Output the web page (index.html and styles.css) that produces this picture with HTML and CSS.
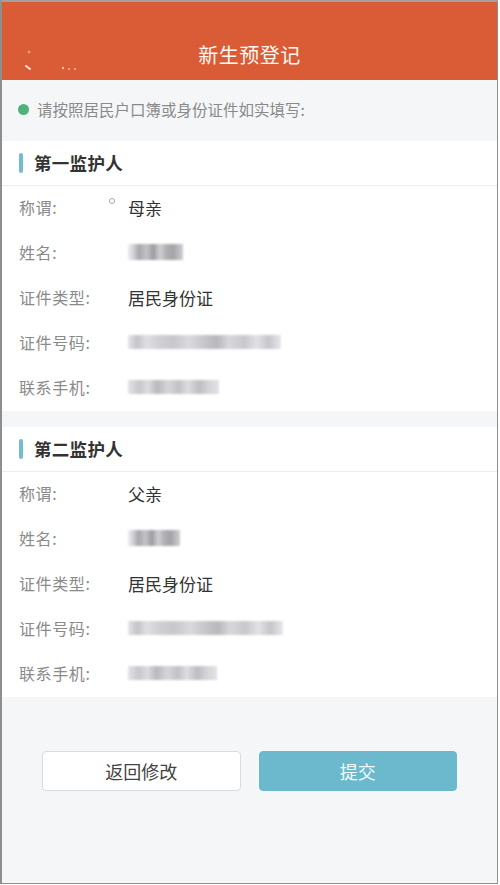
FILE: index.html
```html
<!DOCTYPE html>
<html lang="zh-CN">
<head>
<meta charset="utf-8">
<title>新生预登记</title>
<link rel="stylesheet" href="styles.css">
</head>
<body>
<div class="phone">
  <header class="topbar">
    <div class="back-blur">
      <svg width="70" height="30" viewBox="0 0 70 30">
        <circle cx="7" cy="4" r="1.5" fill="#fff" opacity="0.35"/>
        <path d="M4 18 L8 21" stroke="#fff" stroke-width="2" stroke-linecap="round" opacity="0.85"/>
        <circle cx="41" cy="20" r="1.2" fill="#fff" opacity="0.6"/>
        <circle cx="47" cy="21" r="1" fill="#fff" opacity="0.6"/>
        <circle cx="53" cy="21" r="1" fill="#fff" opacity="0.6"/>
      </svg>
    </div>
    <h1 class="title">新生预登记</h1>
  </header>

  <div class="notice">
    <span class="dot"></span>
    <span class="notice-text">请按照居民户口簿或身份证件如实填写:</span>
  </div>

  <section class="card">
    <div class="card-head"><span class="bar"></span><span class="card-title">第一监护人</span></div>
    <div class="row"><span class="label">称谓:</span><span class="value with-radio"><span class="radio"></span>母亲</span></div>
    <div class="row"><span class="label">姓名:</span><span class="value"><span class="mosaic name" style="width:55px"></span></span></div>
    <div class="row"><span class="label">证件类型:</span><span class="value">居民身份证</span></div>
    <div class="row"><span class="label">证件号码:</span><span class="value"><span class="mosaic long" style="width:153px"></span></span></div>
    <div class="row"><span class="label">联系手机:</span><span class="value"><span class="mosaic" style="width:91px"></span></span></div>
  </section>

  <section class="card second">
    <div class="card-head"><span class="bar"></span><span class="card-title">第二监护人</span></div>
    <div class="row"><span class="label">称谓:</span><span class="value">父亲</span></div>
    <div class="row"><span class="label">姓名:</span><span class="value"><span class="mosaic name" style="width:52px"></span></span></div>
    <div class="row"><span class="label">证件类型:</span><span class="value">居民身份证</span></div>
    <div class="row"><span class="label">证件号码:</span><span class="value"><span class="mosaic long" style="width:155px"></span></span></div>
    <div class="row"><span class="label">联系手机:</span><span class="value"><span class="mosaic" style="width:89px"></span></span></div>
  </section>

  <div class="actions">
    <button class="btn btn-back">返回修改</button>
    <button class="btn btn-submit">提交</button>
  </div>
</div>
</body>
</html>
```

FILE: styles.css
```css
* { box-sizing: border-box; }
html, body { margin: 0; padding: 0; background: #ffffff; }
body {
  font-family: "Noto Sans CJK SC", "Noto Sans", sans-serif;
  width: 500px;
  height: 885px;
}
.phone {
  width: 498px;
  height: 884px;
  border-left: 2px solid #8e8e8e;
  border-top: 2px solid #a0a0a0;
  border-right: 1px solid #8e8e8e;
  border-bottom: 1px solid #8e8e8e;
  background: #f5f6f8;
  overflow: hidden;
}
.topbar {
  position: relative;
  height: 78px;
  background: #d95c37;
  display: flex;
  align-items: flex-end;
  justify-content: center;
  padding-bottom: 10px;
}
.back-blur {
  position: absolute;
  left: 20px;
  top: 46px;
  filter: blur(0.6px);
}
.back-blur svg { display: block; }
.title {
  margin: 0;
  font-size: 20px;
  font-weight: 400;
  color: #fff8f2;
  letter-spacing: 0.5px;
  line-height: 30px;
}
.notice {
  height: 61px;
  display: flex;
  align-items: center;
  padding-left: 16px;
  padding-bottom: 3px;
  background: #f5f6f8;
}
.dot {
  width: 11px;
  height: 11px;
  border-radius: 50%;
  background: #4fb279;
  margin-right: 8px;
}
.notice-text {
  font-size: 15.5px;
  color: #8a8a8a;
}
.card {
  background: #ffffff;
}
.card.second { margin-top: 16px; }
.card-head {
  height: 45px;
  border-bottom: 1px solid #ececec;
  display: flex;
  align-items: center;
  padding-left: 17px;
  padding-bottom: 1px;
}
.bar {
  width: 4px;
  height: 20px;
  border-radius: 2px;
  background: #72bdd0;
  margin-right: 11px;
}
.card-title {
  font-size: 17.5px;
  font-weight: 700;
  color: #333333;
  letter-spacing: 0.3px;
}
.row {
  height: 45px;
  display: flex;
  align-items: center;
  padding-left: 17px;
  padding-bottom: 3px;
}
.label {
  width: 109px;
  font-size: 16px;
  color: #8a8a8a;
  letter-spacing: 0.6px;
}
.value {
  font-size: 17px;
  color: #333333;
  display: flex;
  align-items: center;
}
.with-radio { position: relative; }
.radio {
  position: absolute;
  left: -19px;
  top: 3px;
  width: 6px;
  height: 6px;
  border: 1px solid #aaaaaa;
  border-radius: 50%;
}
.mosaic {
  display: block;
  height: 14px;
  filter: blur(1.2px);
  background:
    linear-gradient(90deg,
      #e4e4e8 0%, #c8c8cc 12%, #dcdce0 22%, #b9b9bd 32%,
      #d6d6da 44%, #c2c2c6 56%, #dedee2 66%, #bdbdc1 78%,
      #d4d4d8 88%, #e2e2e6 100%);
}
.mosaic.name {
  height: 16px;
  background:
    linear-gradient(90deg,
      #ececf0 0%, #d8d8dc 8%, #a8a8ac 20%, #c4c4c8 34%,
      #9c9ca0 46%, #d0d0d4 58%, #b0b0b4 70%, #a4a4a8 82%, #cfcfd3 100%);
}
.mosaic.long {
  background:
    linear-gradient(90deg,
      #e6e6ea 0%, #c4c4c8 6%, #e0e0e4 12%, #d0d0d4 20%,
      #c8c8cc 30%, #dadade 40%, #c6c6ca 50%, #b8b8bc 58%,
      #d8d8dc 66%, #c8c8cc 76%, #e2e2e6 84%, #c6c6ca 92%, #e8e8ec 100%);
}
.actions {
  display: flex;
  gap: 18px;
  padding: 0 40px;
  margin-top: 54px;
}
.btn {
  flex: 1;
  height: 40px;
  border-radius: 4px;
  font-family: "Noto Sans CJK SC", "Noto Sans", sans-serif;
  font-size: 18px;
  cursor: pointer;
}
.btn-back {
  background: #ffffff;
  border: 1px solid #dcdcdc;
  color: #444444;
}
.btn-submit {
  background: #6cb8cc;
  border: 1px solid #6cb8cc;
  color: #f4fbfd;
}
```
